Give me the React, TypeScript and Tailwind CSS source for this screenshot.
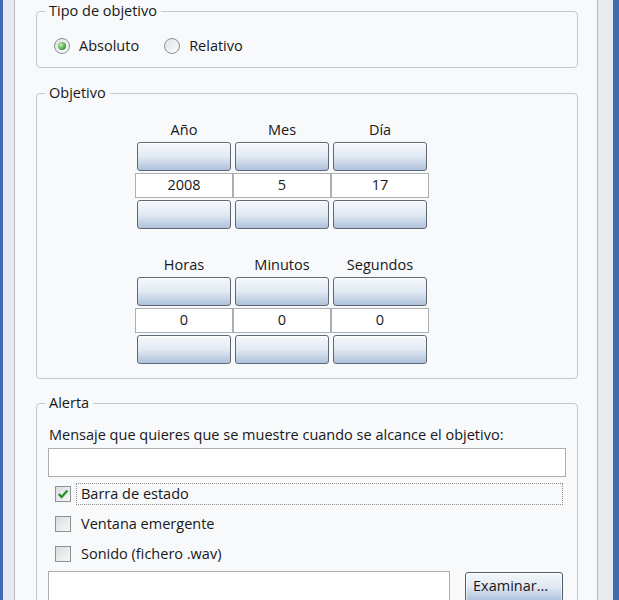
import React from "react";

const font = { fontFamily: '"Open Sans", "Noto Sans", sans-serif' };

function GroupBox({ title, className, children }: { title: string; className: string; children: React.ReactNode }) {
  return (
    <div className={`relative border border-[#c4c8cc] rounded-[4px] ${className}`}>
      <span className="absolute -top-[9px] left-[8px] px-[4px] bg-[#f7f9fb] leading-[16px]">{title}</span>
      {children}
    </div>
  );
}

function Radio({ checked, label }: { checked?: boolean; label: string }) {
  return (
    <div className="flex items-center h-[16px]">
      <span className="w-[16px] h-[16px] rounded-full border border-[#8b9096] bg-linear-to-br from-[#e0e3e6] to-[#fbfbfb] flex items-center justify-center">
        {checked && (
          <span className="w-[8px] h-[8px] rounded-full bg-[radial-gradient(circle_at_35%_35%,#c4f0b8,#3e9b3a_70%)]" />
        )}
      </span>
      <span className="ml-[9px]">{label}</span>
    </div>
  );
}

function Check({ checked, label, focused }: { checked?: boolean; label: string; focused?: boolean }) {
  return (
    <div className="flex items-center h-[22px]">
      <span className="ml-[7px] w-[16px] h-[16px] border border-[#8e9194] bg-linear-to-br from-[#d9dcde] to-[#f8f8f8] flex items-center justify-center shrink-0">
        {checked && (
          <svg width="12" height="12" viewBox="0 0 12 12">
            <path d="M1.8 6 L4.6 9 L10.4 2.4" fill="none" stroke="#2a8f2a" strokeWidth="2.2" />
          </svg>
        )}
      </span>
      <span
        className={`ml-[5px] flex-1 mr-[3px] h-[22px] flex items-center pl-[4px] ${focused ? "border border-dotted border-[#8c8c8c]" : "border border-transparent"}`}
      >
        {label}
      </span>
    </div>
  );
}

function SpinButton() {
  return (
    <div className="mx-[2px] h-[29px] rounded-[3px] border border-[#5f6975] bg-linear-to-b from-[#f5f8fb] via-[#e2eaf3] to-[#aec2db] shadow-[inset_0_1px_0_#ffffff]" />
  );
}

function Spinner({ labels, values }: { labels: string[]; values: string[] }) {
  return (
    <div className="grid grid-cols-[98px_98px_98px] w-[294px]">
      {labels.map((l) => (
        <div key={l} className="text-center leading-[16px] mb-[4px]">{l}</div>
      ))}
      {labels.map((l) => (
        <SpinButton key={l + "up"} />
      ))}
      {values.map((v, i) => (
        <div
          key={i}
          className="mt-[2px] mb-[2px] h-[25px] border border-[#abaeb2] bg-white flex items-center justify-center leading-none"
        >
          {v}
        </div>
      ))}
      {labels.map((l) => (
        <SpinButton key={l + "down"} />
      ))}
    </div>
  );
}

export default function App() {
  return (
    <div className="w-[619px] h-[600px] overflow-hidden flex text-[14.5px] text-[#181818]" style={font}>
      {/* left window frame */}
      <div className="w-[3px] bg-[#3d6cb4]" />
      <div className="w-[11px] bg-[#e7eaee]" />
      <div className="w-[1px] bg-[#b8bcc1]" />

      <main className="w-[582px] bg-[#f7f9fb]">
        <GroupBox title="Tipo de objetivo" className="mt-[11px] ml-[21px] w-[542px] h-[57px]">
          <div className="flex items-center pt-[26px] pl-[17px] gap-[25px]">
            <Radio checked label="Absoluto" />
            <Radio label="Relativo" />
          </div>
        </GroupBox>

        <GroupBox title="Objetivo" className="mt-[25px] ml-[21px] w-[542px] h-[286px]">
          <div className="pt-[28px] pl-[98px] flex flex-col gap-[28px]">
            <Spinner labels={["Año", "Mes", "Día"]} values={["2008", "5", "17"]} />
            <Spinner labels={["Horas", "Minutos", "Segundos"]} values={["0", "0", "0"]} />
          </div>
        </GroupBox>

        <GroupBox title="Alerta" className="mt-[24px] ml-[21px] w-[542px] h-[240px]">
          <div className="pt-[23px] pl-[11px] w-[529px]">
            <p className="leading-[16px] ml-[1px]">Mensaje que quieres que se muestre cuando se alcance el objetivo:</p>
            <div className="mt-[5px] h-[29px] w-[518px] border border-[#abaeb2] bg-white" />
            <div className="mt-[6px] w-[518px] flex flex-col gap-[8px]">
              <Check checked focused label="Barra de estado" />
              <Check label="Ventana emergente" />
              <Check label="Sonido (fichero .wav)" />
            </div>
            <div className="mt-[6px] flex items-start">
              <div className="h-[30px] w-[402px] border border-[#abaeb2] bg-white" />
              <button className="ml-[15px] mt-[1px] h-[30px] w-[98px] rounded-[3px] border border-[#525d69] bg-linear-to-b from-[#f5f8fb] via-[#e0e8f2] to-[#adc1db] text-left pl-[7px] pb-[2px] shadow-[inset_0_0_0_1px_#ffffffaa]">
                Examinar...
              </button>
            </div>
          </div>
        </GroupBox>
      </main>

      {/* right window frame */}
      <div className="w-[1px] bg-[#b8bcc1]" />
      <div className="w-[15px] bg-[#e7eaee]" />
      <div className="w-[6px] bg-[#3d6cb4]" />
    </div>
  );
}
